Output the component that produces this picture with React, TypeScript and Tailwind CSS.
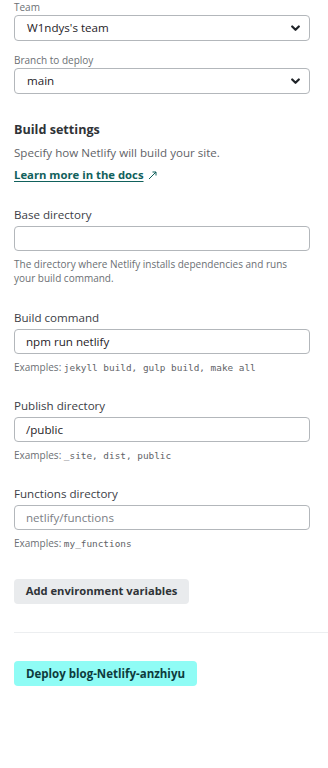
import React from 'react';

const font = { fontFamily: '"Open Sans", "Noto Sans", sans-serif' };

const Chevron: React.FC = () => (
  <svg width="9" height="7" viewBox="0 0 9 7" className="text-[#1f2328]">
    <path d="M1.2 1.5 L4.5 4.8 L7.8 1.5" fill="none" stroke="currentColor" strokeWidth="2.2" strokeLinecap="round" strokeLinejoin="round" />
  </svg>
);

const SelectBox: React.FC<{ label: string; value: string }> = ({ label, value }) => (
  <div>
    <div className="text-[10px] leading-[14px] text-[#6b6f74]">{label}</div>
    <div className="mt-[1px] h-[26px] rounded-[4px] border border-[#b3b7bb] flex items-center justify-between pl-[12px] pr-[9px]">
      <span className="text-[11.6px] text-[#1f2328]">{value}</span>
      <Chevron />
    </div>
  </div>
);

const Field: React.FC<{ label: string; value?: string; placeholder?: string; children?: React.ReactNode }> = ({ label, value, placeholder, children }) => (
  <div>
    <div className="text-[11.6px] leading-[16px] text-[#3c4046]">{label}</div>
    <div className="mt-[3px] h-[25px] rounded-[4px] border border-[#b3b7bb] flex items-center pl-[11px]">
      {value && <span className="text-[11.6px] text-[#1f2328]">{value}</span>}
      {placeholder && <span className="text-[11.6px] text-[#7c8086]">{placeholder}</span>}
    </div>
    {children}
  </div>
);

// examples line: "Examples:" in the body font, the values in mono
const Hint: React.FC<{ items: string[] }> = ({ items }) => (
  <p className="mt-[6px] h-[14px] text-[10px] leading-[14px] text-[#6b6f74] whitespace-pre">
    {'Examples: '}
    <code className="text-[9.4px] leading-none text-[#5f6368]" style={{ fontFamily: '"DejaVu Sans Mono", monospace' }}>
      {items.join(', ')}
    </code>
  </p>
);

export default function App() {
  return (
    <div className="w-[328px] h-[768px] bg-white overflow-hidden" style={font}>
      <div className="pl-[14px] pr-[18px] pt-0">
        <SelectBox label="Team" value="W1ndys's team" />
        <div className="mt-[12px]">
          <SelectBox label="Branch to deploy" value="main" />
        </div>

        <h3 className="mt-[27px] text-[12.6px] font-bold leading-[18px] text-[#2f3337]">Build settings</h3>
        <p className="mt-[6px] text-[11.6px] leading-[16px] text-[#5f6368]">Specify how Netlify will build your site.</p>
        <a className="mt-[6px] inline-flex items-center gap-[4px] text-[11.3px] leading-[16px] font-bold text-[#11615c] underline underline-offset-2">
          Learn more in the docs
          <svg width="9" height="9" viewBox="0 0 9 9" className="text-[#11615c]">
            <path d="M1 8 L8 1 M4.5 1 H8 V4.5" fill="none" stroke="currentColor" strokeWidth="1" />
          </svg>
        </a>

        <div className="mt-[22px]">
          <Field label="Base directory">
            <p className="mt-[6px] text-[10px] leading-[14px] text-[#6b6f74]">
              The directory where Netlify installs dependencies and runs your build command.
            </p>
          </Field>
        </div>

        <div className="mt-[25px]">
          <Field label="Build command" value="npm run netlify">
            <Hint items={['jekyll build', 'gulp build', 'make all']} />
          </Field>
        </div>

        <div className="mt-[24px]">
          <Field label="Publish directory" value="/public">
            <Hint items={['_site', 'dist', 'public']} />
          </Field>
        </div>

        <div className="mt-[24px]">
          <Field label="Functions directory" placeholder="netlify/functions">
            <Hint items={['my_functions']} />
          </Field>
        </div>

        <button className="mt-[29px] h-[25px] w-[175px] rounded-[4px] bg-[#e9ebed] text-[11.2px] font-bold text-[#2f3337]">
          Add environment variables
        </button>
      </div>

      <div className="mt-[28px] ml-[14px] h-px bg-[#eceef0]" />

      <div className="pl-[14px] mt-[27px]">
        <button className="h-[25px] w-[183px] rounded-[4px] bg-[#8ffcf5] text-[11.5px] font-bold text-[#0d3b3c]">
          Deploy blog-Netlify-anzhiyu
        </button>
      </div>
    </div>
  );
}
